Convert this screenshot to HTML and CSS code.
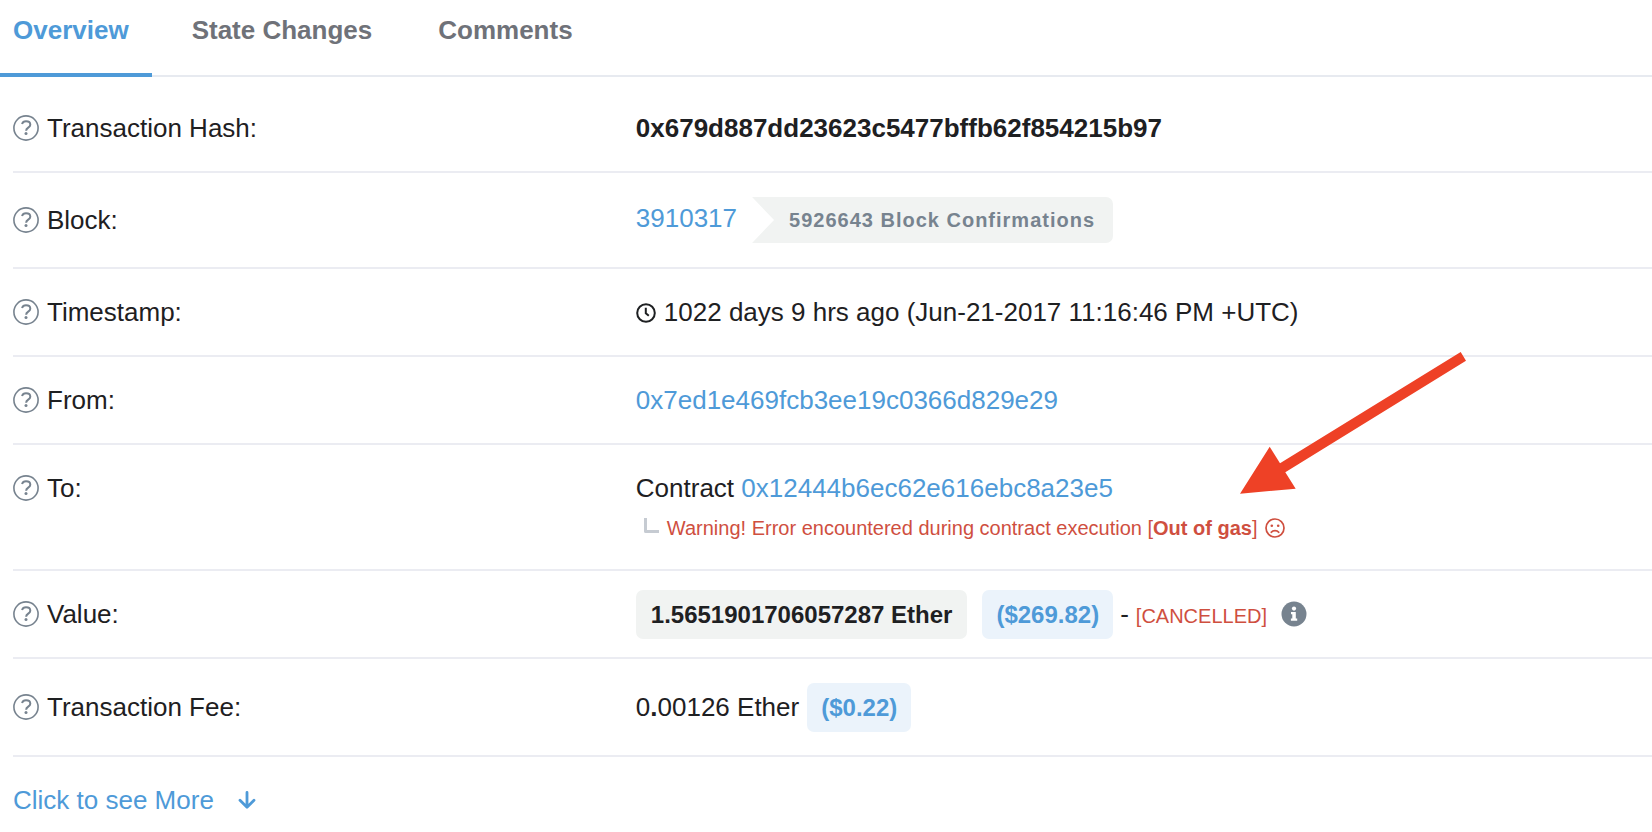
FILE: index.html
```html
<!DOCTYPE html>
<html lang="en">
<head>
  <meta charset="UTF-8">
  <title>Transaction Details</title>
  <meta name="viewport" content="width=device-width, initial-scale=1.0">
  <link rel="stylesheet" href="styles.css">
</head>
<body>
  <!-- shared icon -->
  <svg class="sprite" aria-hidden="true">
    <symbol id="help" viewBox="0 0 26 26">
      <circle cx="13" cy="13" r="12.1" fill="none" stroke="currentColor" stroke-width="1.6"/>
      <path d="M9 9C9.6 7.2 11 6.3 13 6.3c2.6 0 4.3 1.3 4.3 3.4 0 3.1-4.2 2.8-4.2 6" fill="none" stroke="currentColor" stroke-width="2"/>
      <circle cx="13" cy="18.6" r="1.5" fill="currentColor"/>
    </symbol>
  </svg>

  <nav class="tabs">
    <a href="#overview" class="tab active">Overview</a>
    <a href="#statechange" class="tab">State Changes</a>
    <a href="#comments" class="tab">Comments</a>
  </nav>

  <main class="details" id="overview">
    <dl class="rows">
      <div class="row first">
        <dt><svg class="help"><use href="#help"/></svg>Transaction Hash:</dt>
        <dd><strong>0x679d887dd23623c5477bffb62f854215b97</strong></dd>
      </div>
      <div class="row tall">
        <dt><svg class="help"><use href="#help"/></svg>Block:</dt>
        <dd class="inline">
          <a href="#block">3910317</a>
          <span class="confirmations">5926643 Block Confirmations</span>
        </dd>
      </div>
      <div class="row">
        <dt><svg class="help"><use href="#help"/></svg>Timestamp:</dt>
        <dd>
          <svg class="clock" viewBox="0 0 20 20">
            <circle cx="10" cy="10" r="8.8" fill="none" stroke="currentColor" stroke-width="2"/>
            <path d="M9.8 4.8V10.3L12.8 12.8" fill="none" stroke="currentColor" stroke-width="2"/>
          </svg>1022 days 9 hrs ago (Jun-21-2017 11:16:46 PM +UTC)
        </dd>
      </div>
      <div class="row">
        <dt><svg class="help"><use href="#help"/></svg>From:</dt>
        <dd><a href="#from">0x7ed1e469fcb3ee19c0366d829e29</a></dd>
      </div>
      <div class="row top">
        <dt><svg class="help"><use href="#help"/></svg>To:</dt>
        <dd>
          Contract <a href="#to">0x12444b6ec62e616ebc8a23e5</a>
          <div class="warning">
            <span class="elbow"></span>
            <span>Warning! Error encountered during contract execution [<strong>Out of gas</strong>]</span>
            <svg class="sad" viewBox="0 0 20 20">
              <circle cx="10" cy="10" r="9" fill="none" stroke="currentColor" stroke-width="1.7"/>
              <circle cx="6.8" cy="7.8" r="1.3" fill="currentColor"/>
              <circle cx="13.2" cy="7.8" r="1.3" fill="currentColor"/>
              <path d="M6.3 14.3C8 12 12 12 13.7 14.3" fill="none" stroke="currentColor" stroke-width="1.7" stroke-linecap="round"/>
            </svg>
          </div>
        </dd>
      </div>
      <div class="row">
        <dt><svg class="help"><use href="#help"/></svg>Value:</dt>
        <dd class="inline">
          <span class="pill ether">1.5651901706057287 Ether</span>
          <span class="pill usd">($269.82)</span>
          <span class="dash">-</span>
          <span class="cancelled">[CANCELLED]</span>
          <svg class="info" viewBox="0 0 26 26">
            <circle cx="13" cy="13" r="12.5" fill="currentColor"/>
            <circle cx="13" cy="7.6" r="2.1" fill="#fff"/>
            <path d="M10 11h4.8v6.5h1.4v2.2H9.9v-2.2h1.4v-4.3H10z" fill="#fff"/>
          </svg>
        </dd>
      </div>
      <div class="row fee">
        <dt><svg class="help"><use href="#help"/></svg>Transaction Fee:</dt>
        <dd class="inline">
          <span>0<b>.</b>00126 Ether</span>
          <span class="pill usd">($0.22)</span>
        </dd>
      </div>
    </dl>

    <a href="#more" class="more">Click to see More
      <svg class="down" viewBox="0 0 18 18">
        <path d="M9 1.5V16M2 9.2L9 16.2L16 9.2" fill="none" stroke="currentColor" stroke-width="2.8" stroke-linecap="round" stroke-linejoin="round"/>
      </svg>
    </a>
  </main>

  <!-- arrow pointing at the failed contract call -->
  <svg class="pointer" viewBox="0 0 226 142" aria-hidden="true">
    <polygon points="220.7,0 226,8.7 45.3,120.3 55.7,136.7 0,141.7 29.7,94.7 40,111.3" fill="#ee4126"/>
  </svg>
</body>
</html>
```

FILE: styles.css
```css
* { box-sizing: border-box; }
body {
  margin: 0; position: relative; background: #fff; color: #1e2022;
  font-family: "Liberation Sans", Arial, sans-serif; font-size: 26px; line-height: 40px;
}
a { color: #4e9ad8; text-decoration: none; }
svg { flex: none; }
.sprite { display: none; }

.tabs { display: flex; height: 77px; border-bottom: 2px solid #e7eaf0; }
.tab {
  height: 77px; padding: 10px 23px 0 13px; margin-right: 40px;
  color: #6f7279; font-weight: bold; border-bottom: 4px solid transparent;
}
.tab.active { color: #4e9ad8; border-color: #4e9ad8; }
.tab + .tab { padding: 10px 14px 0 0; margin-right: 52px; }

.details { padding-left: 13px; }
.rows { margin: 0; }
.row {
  display: grid; grid-template-columns: 38% 1fr; align-items: center;
  min-height: 88px; border-bottom: 2px solid #ebecf2;
}
.row.first { min-height: 96px; padding-top: 8px; }
.row.tall { min-height: 96px; }
.row.fee { min-height: 98px; }
.row.top { align-items: start; padding: 23px 0 21px; }
dt { display: flex; align-items: center; gap: 8px; }
dd { margin: 0; }
dd.inline { display: flex; align-items: baseline; }

.help { width: 26px; height: 26px; color: #77838f; }
.clock { width: 20px; height: 20px; margin-right: 8px; vertical-align: -2px; }

.confirmations {
  margin-left: 15px; padding: 0 18px 0 37px; line-height: 46px;
  background: #f1f3f2; border-radius: 0 7px 7px 0; color: #77838f;
  font-size: 20px; font-weight: bold; letter-spacing: 1px;
  clip-path: polygon(0 0, 100% 0, 100% 100%, 0 100%, 22px 50%);
}

.warning {
  display: flex; align-items: center; padding-left: 8px;
  color: #cf4f3f; font-size: 20px;
}
.elbow {
  align-self: flex-start; width: 15px; height: 15px; margin: 10px 8px 0 0;
  border-left: 3px solid #c6cbd2; border-bottom: 3px solid #c6cbd2; border-bottom-left-radius: 2px;
}
.sad { width: 20px; height: 20px; margin-left: 8px; }

.pill { padding: 0 15px; border-radius: 7px; font-size: 24px; line-height: 49px; font-weight: bold; }
.ether { background: #f1f3f2; }
.usd { padding: 0 14px; background: #ebf3fb; color: #4e9ad8; margin-left: 8px; }
.ether + .usd { margin-left: 15px; }
.dash { margin: 0 7px; }
.cancelled { color: #cf4f3f; font-size: 20px; }
.info { width: 26px; height: 26px; margin-left: 14px; color: #77838f; align-self: center; }

.more { display: inline-flex; align-items: center; margin-top: 23px; }
.down { width: 18px; height: 18px; margin-left: 24px; }

.pointer { position: absolute; left: 1240px; top: 352px; width: 226px; height: 142px; }
```
